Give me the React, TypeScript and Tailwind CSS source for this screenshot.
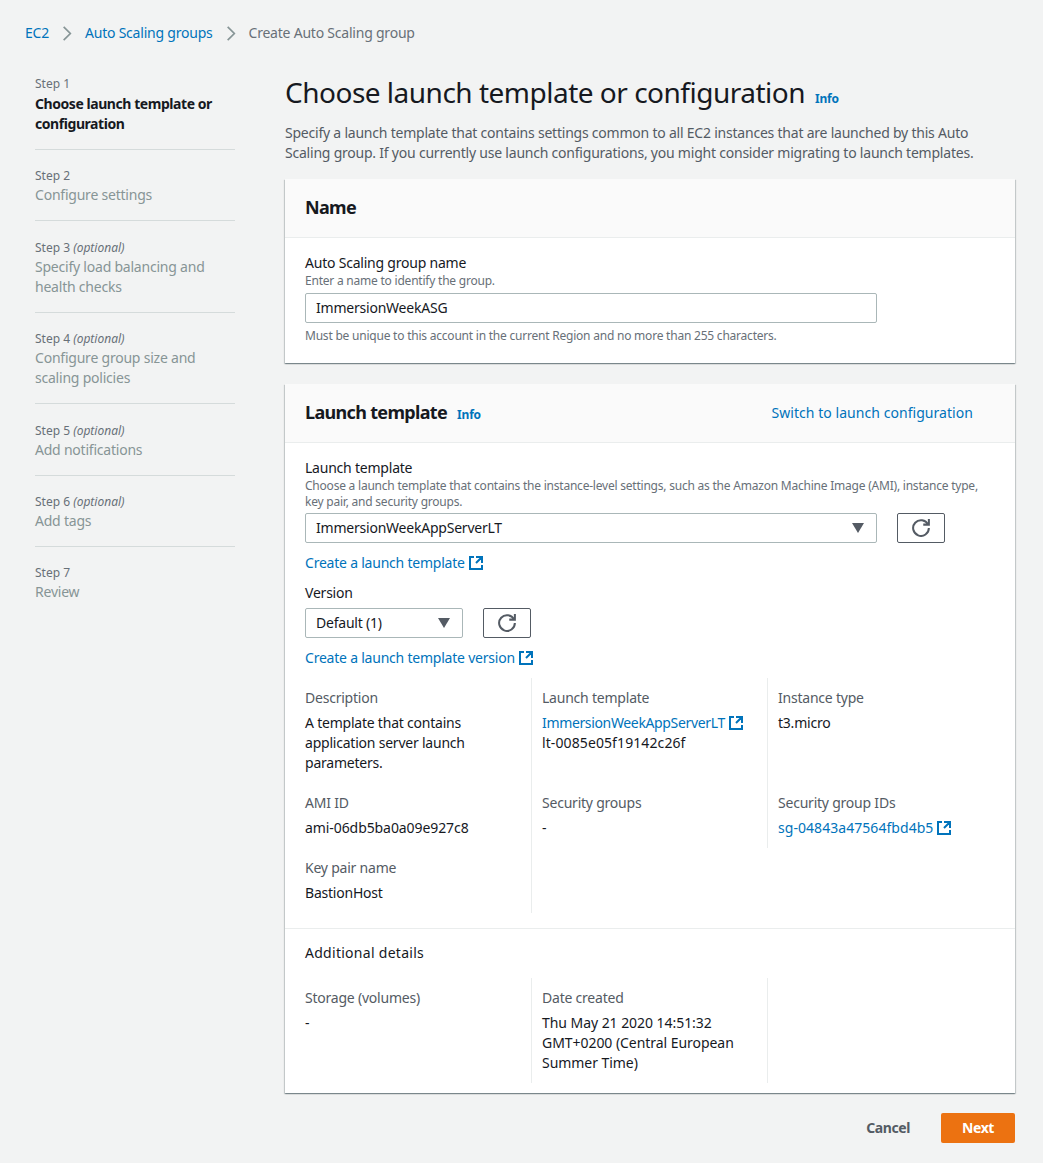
import React from 'react';

const ExternalIcon = () => (
  <svg viewBox="0 0 16 16" className="ml-[3px] inline-block h-4 w-4 align-[-3px]" fill="none" stroke="#0073bb" strokeWidth="2">
    <path d="M14 8.010v-6H8M14.020 2L8 8.010M6 2.010H2v12h12v-4" />
  </svg>
);

const RefreshButton = () => (
  <button className="flex h-[30px] w-12 items-center justify-center rounded-[2px] border border-[#545b64] bg-white">
    <svg viewBox="0 0 16 16" className="h-[18px] w-[18px]" fill="none" stroke="#545b64" strokeWidth="1.800">
      <path d="M10 5h5V0" />
      <path d="M15 8a7 7 0 1 1-.7-3" />
    </svg>
  </button>
);

const Caret = () => (
  <svg viewBox="0 0 12 10" className="h-[10px] w-3" fill="#545b64">
    <path d="M0 0h12L6 10z" />
  </svg>
);

const Chevron = () => (
  <svg viewBox="0 0 12 18" className="mx-[13px] h-[15px] w-[10px]" fill="none" stroke="#879596" strokeWidth="2">
    <path d="M2 1l8 8-8 8" />
  </svg>
);

const steps = [
  { n: 'Step 2', label: ['Configure settings'] },
  { n: 'Step 3', optional: true, label: ['Specify load balancing and', 'health checks'] },
  { n: 'Step 4', optional: true, label: ['Configure group size and', 'scaling policies'] },
  { n: 'Step 5', optional: true, label: ['Add notifications'] },
  { n: 'Step 6', optional: true, label: ['Add tags'] },
  { n: 'Step 7', label: ['Review'] },
];

const Cell = ({ label, border, children }: { label?: string; border?: boolean; children?: React.ReactNode }) => (
  <div className={`pt-[10px] pb-[10px] ${border ? 'border-l border-[#eaeded] pl-[10px]' : ''}`}>
    {label && <div className="leading-5 text-[#545b64]">{label}</div>}
    {children && <div className="mt-[5px] leading-5 text-[#16191f]">{children}</div>}
  </div>
);

const Link = ({ children }: { children: React.ReactNode }) => <a className="text-[#0073bb]">{children}</a>;

const cardShadow = 'bg-white shadow-[0_1px_1px_0_rgba(0,28,36,0.3),1px_1px_1px_0_rgba(0,28,36,0.15),-1px_1px_1px_0_rgba(0,28,36,0.15)]';

export default function App() {
  return (
    <div className="min-h-[1163px] bg-[#f2f3f3] font-['Noto_Sans',sans-serif] text-sm tracking-[-0.22px] text-[#16191f]">
      <div className="flex items-center pl-[25px] pt-[23px] leading-5">
        <Link>EC2</Link>
        <Chevron />
        <Link>Auto Scaling groups</Link>
        <Chevron />
        <span className="text-[#687078]">Create Auto Scaling group</span>
      </div>

      <div className="mt-[32px] flex pl-[35px] pb-5">
        <nav className="w-[200px] shrink-0">
          <div className="border-b border-[#d5dbdb] pb-[15px]">
            <div className="text-xs leading-[18px] tracking-normal text-[#687078]">Step 1</div>
            <div className="mt-px font-bold leading-5 tracking-[-0.44px]">Choose launch template or configuration</div>
          </div>
          {steps.map((s, i) => (
            <div key={s.n} className={`pt-[17.4px] ${i < steps.length - 1 ? 'border-b border-[#d5dbdb] pb-[15px]' : ''}`}>
              <div className="text-xs leading-[18px] tracking-normal text-[#687078]">
                {s.n} {s.optional && <i>(optional)</i>}
              </div>
              {s.label.map(l => (
                <div key={l} className="leading-5 text-[#879596]">{l}</div>
              ))}
            </div>
          ))}
        </nav>

        <main className="ml-[50px] w-[730px] shrink-0">
          <div className="flex items-baseline">
            <h1 className="text-[28px] leading-[34px] font-normal tracking-[-0.5px]">Choose launch template or configuration</h1>
            <a className="ml-[10px] text-xs font-bold tracking-[-0.2px] text-[#0073bb]">Info</a>
          </div>
          <p className="mt-[14px] leading-5 text-[#545b64]">
            Specify a launch template that contains settings common to all EC2 instances that are launched by this Auto Scaling group. If you currently use launch configurations, you might consider migrating to launch templates.
          </p>

          <section className={`mt-4 ${cardShadow}`}>
            <div className="flex h-[59px] items-center border-b border-[#eaeded] bg-[#fafafa] px-5 pb-[2px]">
              <h2 className="text-lg font-bold tracking-[-0.67px]">Name</h2>
            </div>
            <div className="px-5 pt-[15px] pb-[19px]">
              <div className="leading-5">Auto Scaling group name</div>
              <div className="text-xs leading-4 text-[#687078]">Enter a name to identify the group.</div>
              <div className="mt-1 flex h-[30px] w-[572px] items-center rounded-[2px] border border-[#aab7b8] bg-white px-[10px]">ImmersionWeekASG</div>
              <div className="mt-[5px] text-xs leading-4 text-[#687078]">Must be unique to this account in the current Region and no more than 255 characters.</div>
            </div>
          </section>

          <section className={`mt-[21px] ${cardShadow}`}>
            <div className="flex h-[59px] items-center border-b border-[#eaeded] bg-[#fafafa] pl-5 pr-[42px]">
              <h2 className="-mt-[2px] text-lg font-bold tracking-[-0.67px]">Launch template</h2>
              <a className="ml-[10px] mt-[3px] text-xs font-bold tracking-[-0.2px] text-[#0073bb]">Info</a>
              <a className="ml-auto tracking-[0.05px] text-[#0073bb]">Switch to launch configuration</a>
            </div>

            <div className="px-5 pt-[15px]">
              <div className="leading-5">Launch template</div>
              <div className="text-xs leading-4 text-[#687078]">
                Choose a launch template that contains the instance-level settings, such as the Amazon Machine Image (AMI), instance type, key pair, and security groups.
              </div>
              <div className="mt-[3px] flex gap-5">
                <div className="flex h-[30px] w-[572px] items-center justify-between rounded-[2px] border border-[#aab7b8] bg-white pl-[10px] pr-[12px]">
                  ImmersionWeekAppServerLT <Caret />
                </div>
                <RefreshButton />
              </div>
              <div className="mt-[10px] leading-5"><Link>Create a launch template<ExternalIcon /></Link></div>
              <div className="mt-[10px] leading-5">Version</div>
              <div className="mt-[5px] flex gap-5">
                <div className="flex h-[30px] w-[158px] items-center justify-between rounded-[2px] border border-[#aab7b8] bg-white pl-[10px] pr-[12px]">
                  Default (1) <Caret />
                </div>
                <RefreshButton />
              </div>
              <div className="mt-[10px] leading-5"><Link>Create a launch template version<ExternalIcon /></Link></div>

              <div className="mt-[10px] grid grid-cols-[226px_236px_1fr]">
                <Cell label="Description">
                  <div className="w-[190px]">A template that contains application server launch parameters.</div>
                </Cell>
                <Cell label="Launch template" border>
                  <span className="tracking-[-0.35px]"><Link>ImmersionWeekAppServerLT</Link></span><ExternalIcon />
                  <div className="tracking-[0.1px]">lt-0085e05f19142c26f</div>
                </Cell>
                <Cell label="Instance type" border>t3.micro</Cell>
                <Cell label="AMI ID"><span className="tracking-[-0.08px]">ami-06db5ba0a09e927c8</span></Cell>
                <Cell label="Security groups" border>-</Cell>
                <Cell label="Security group IDs" border>
                  <span className="tracking-[0.05px]"><Link>sg-04843a47564fbd4b5</Link></span><ExternalIcon />
                </Cell>
                <Cell label="Key pair name">BastionHost</Cell>
                <Cell border />
              </div>
            </div>

            <div className="mt-[15px] border-t border-[#eaeded] px-5 pt-[14px] pb-[10px]">
              <div className="leading-5 tracking-[0.28px]">Additional details</div>
              <div className="mt-[15px] grid grid-cols-[226px_236px_1fr]">
                <Cell label="Storage (volumes)">-</Cell>
                <Cell label="Date created" border>
                  <span className="tracking-[-0.05px]">Thu May 21 2020 14:51:32 GMT+0200 (Central European Summer Time)</span>
                </Cell>
                <Cell border />
              </div>
            </div>
          </section>

          <div className="mt-5 flex items-center justify-end">
            <button className="mr-[31px] font-bold tracking-[-0.4px] text-[#545b64]">Cancel</button>
            <button className="h-[30px] w-[74px] rounded-[2px] bg-[#ec7211] font-bold tracking-[-0.4px] text-white">Next</button>
          </div>
        </main>
      </div>
    </div>
  );
}
